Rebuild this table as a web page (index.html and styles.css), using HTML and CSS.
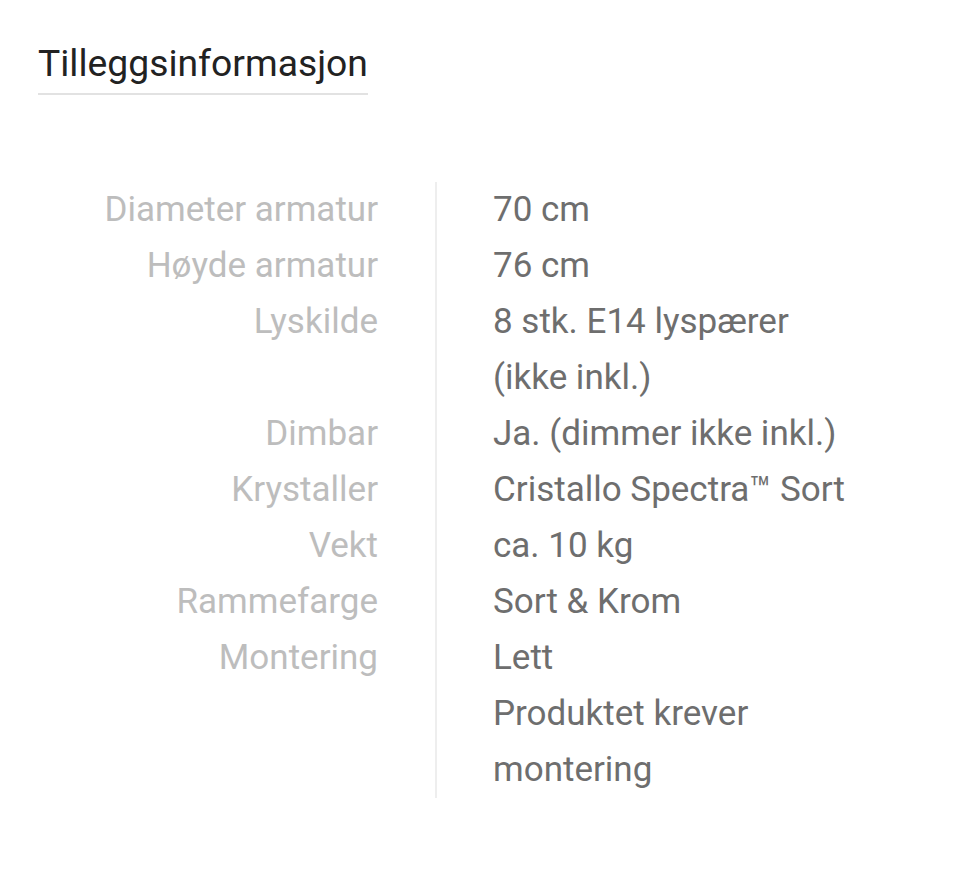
FILE: index.html
```html
<!DOCTYPE html>
<html lang="no">
<head>
<meta charset="utf-8">
<link rel="stylesheet" href="styles.css">
</head>
<body>
<div class="page">
  <h2 class="title">Tilleggsinformasjon</h2>
  <div class="specs">
    <div class="label">Diameter armatur</div><div class="value">70 cm</div>
    <div class="label">Høyde armatur</div><div class="value">76 cm</div>
    <div class="label">Lyskilde</div><div class="value">8 stk. E14 lyspærer<br>(ikke inkl.)</div>
    <div class="label">Dimbar</div><div class="value">Ja. (dimmer ikke inkl.)</div>
    <div class="label">Krystaller</div><div class="value">Cristallo Spectra™ Sort</div>
    <div class="label">Vekt</div><div class="value">ca. 10 kg</div>
    <div class="label">Rammefarge</div><div class="value">Sort &amp; Krom</div>
    <div class="label">Montering</div><div class="value">Lett<br>Produktet krever<br>montering</div>
  </div>
</div>
</body>
</html>
```
FILE: styles.css
```css
html, body {
  margin: 0;
  padding: 0;
  background: #fff;
}
body {
  font-family: Roboto, "Noto Sans", sans-serif;
}
.page {
  padding: 38px 0 0 38px;
}
.title {
  display: inline-block;
  margin: 0;
  font-size: 37.3px;
  font-weight: 400;
  color: #222;
  line-height: 50px;
  padding-bottom: 5px;
  border-bottom: 2px solid #e2e2e2;
}
.specs {
  display: grid;
  grid-template-columns: 399px auto;
  margin-top: 87px;
  font-size: 35px;
  line-height: 56px;
}
.label {
  padding-right: 57px;
  text-align: right;
  color: #bdbdbd;
  border-right: 2px solid #eeeeee;
}
.value {
  padding-left: 56px;
  color: #6e6e6e;
}
```
